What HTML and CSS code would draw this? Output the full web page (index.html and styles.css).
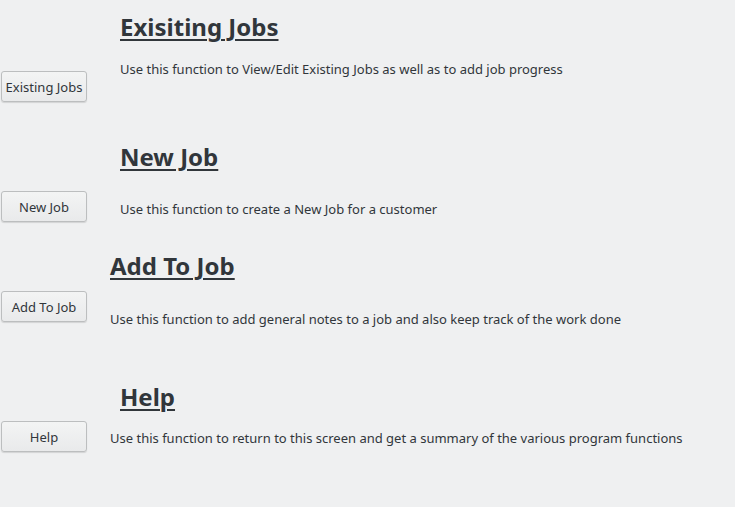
FILE: index.html
```html
<!DOCTYPE html>
<html>
<head>
<meta charset="utf-8">
<link rel="stylesheet" href="styles.css">
</head>
<body>
<main class="page">
  <section class="item item-1">
    <button class="btn">Existing Jobs</button>
    <div class="info">
      <h2 class="title">Exisiting Jobs</h2>
      <p class="desc">Use this function to View/Edit Existing Jobs as well as to add job progress</p>
    </div>
  </section>
  <section class="item item-2">
    <button class="btn">New Job</button>
    <div class="info">
      <h2 class="title">New Job</h2>
      <p class="desc">Use this function to create a New Job for a customer</p>
    </div>
  </section>
  <section class="item item-3">
    <button class="btn">Add To Job</button>
    <div class="info">
      <h2 class="title">Add To Job</h2>
      <p class="desc">Use this function to add general notes to a job and also keep track of the work done</p>
    </div>
  </section>
  <section class="item item-4">
    <button class="btn">Help</button>
    <div class="info">
      <h2 class="title">Help</h2>
      <p class="desc">Use this function to return to this screen and get a summary of the various program functions</p>
    </div>
  </section>
</main>
</body>
</html>
```

FILE: styles.css
```css
html, body {
  margin: 0;
  padding: 0;
  background: #eff0f1;
}
body {
  width: 735px;
  height: 507px;
  overflow: hidden;
  font-family: "Noto Sans", "Open Sans", sans-serif;
  color: #31363b;
}
.page {
  display: flex;
  flex-direction: column;
  padding-top: 10px;
}
.item {
  display: flex;
  align-items: flex-start;
}
.btn {
  flex: none;
  width: 86px;
  height: 31px;
  margin-left: 1px;
  padding: 0;
  border: 1px solid #bcbebf;
  border-radius: 3px;
  background: linear-gradient(#f3f4f4, #e9eaeb);
  box-shadow: 0 1px 1px rgba(0, 0, 0, 0.12);
  font-family: "Noto Sans", "Open Sans", sans-serif;
  font-size: 13px;
  color: #31363b;
}
.info {
  display: flex;
  flex-direction: column;
}
.title {
  margin: 0;
  font-size: 24px;
  line-height: 34px;
  font-weight: bold;
  text-decoration: underline;
  text-decoration-thickness: 2px;
  text-underline-offset: 3px;
}
.desc {
  margin: 0;
  font-size: 13px;
  line-height: 18px;
}

.item-1 { height: 130px; }
.item-1 .btn { margin-top: 61px; }
.item-1 .info { margin-left: 33px; }
.item-1 .desc { margin-top: 16px; }

.item-2 { height: 109px; }
.item-2 .btn { margin-top: 51px; }
.item-2 .info { margin-left: 33px; }
.item-2 .desc { margin-top: 26px; }

.item-3 { height: 131px; }
.item-3 .btn { margin-top: 42px; }
.item-3 .info { margin-left: 23px; }
.item-3 .desc { margin-top: 27px; }

.item-4 .btn { margin-top: 41px; }
.item-4 .info { margin-left: 23px; }
.item-4 .title { margin-left: 10px; }
.item-4 .desc { margin-top: 15px; }
```
